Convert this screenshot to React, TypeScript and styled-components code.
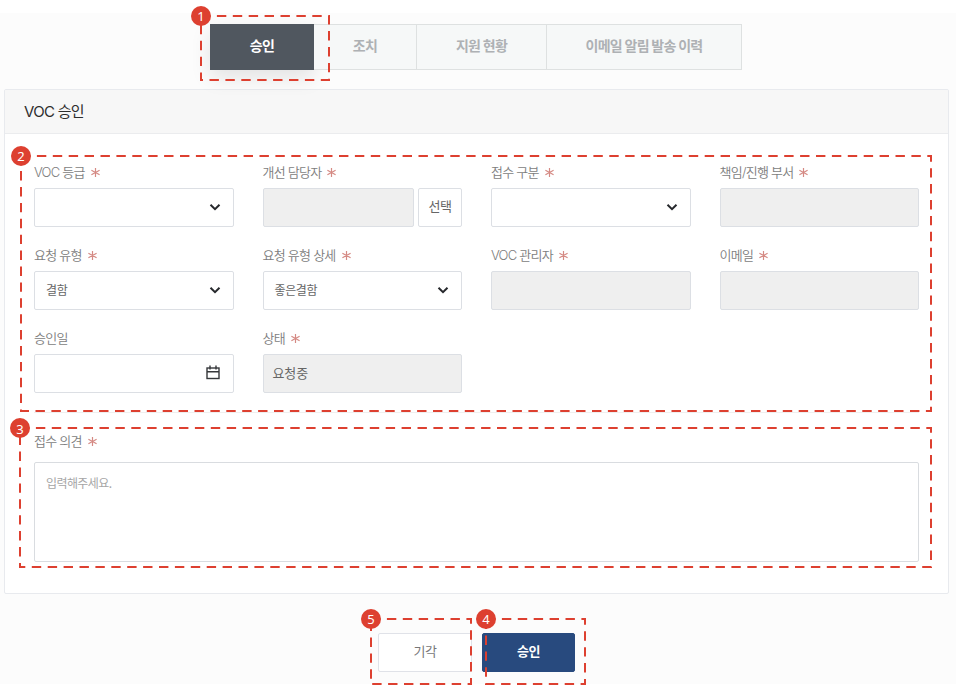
import React from "react";
import styled, { createGlobalStyle, css } from "styled-components";

const GlobalStyle = createGlobalStyle`
  * { box-sizing: border-box; }
  body {
    margin: 0;
    background: #fff;
    font-family: "Noto Sans CJK KR", sans-serif;
  }
`;

const Page = styled.div`
  position: relative;
  width: 956px;
  height: 693px;
  padding: 13px 0 9px;
  overflow: hidden;
`;

const Content = styled.main`
  height: 671px;
  padding: 11px 7px 0 4px;
  background: #fcfcfc;
`;

const Tabs = styled.nav`
  display: flex;
  width: 532px;
  height: 46px;
  margin-left: 206px;
`;

const Tab = styled.button<{ $width: number; $active?: boolean }>`
  width: ${(p) => p.$width}px;
  height: 46px;
  margin: 0;
  padding: 0 0 4px;
  border: 1px solid #dee1e1;
  border-left: 0;
  background: #f6f8f8;
  color: #aeb1b4;
  font: 700 14px "Noto Sans CJK KR", sans-serif;
  letter-spacing: -0.7px;
  ${(p) =>
    p.$active &&
    css`
      border: 0;
      background: #50575f;
      color: #fff;
      box-shadow: 0 8px 20px rgba(0, 0, 0, 0.1);
    `}
`;

const Panel = styled.section`
  height: 505px;
  margin-top: 19px;
  border: 1px solid #e8eaee;
  border-radius: 2px;
  background: #fff;
`;

const PanelHeader = styled.h2`
  display: flex;
  align-items: center;
  height: 44px;
  margin: 0;
  padding: 0 19px;
  border-bottom: 1px solid #ebecee;
  background: rgba(246, 246, 246, 0.85);
  color: #2e2e2e;
  font: 400 15px/22px Inter, "Noto Sans CJK KR", sans-serif;
  letter-spacing: -0.7px;
`;

const PanelBody = styled.div`
  padding: 29px 29px 0;
`;

const FieldGrid = styled.div`
  display: grid;
  grid-template-columns: repeat(4, 1fr);
  column-gap: 29px;
  grid-auto-rows: 83px;
  height: 250px;
  border-bottom: 1px solid #efefef;
`;

const Field = styled.div`
  display: flex;
  flex-direction: column;
`;

const Label = styled.label`
  display: flex;
  align-items: center;
  gap: 6px;
  height: 18px;
  margin-bottom: 7px;
  padding-top: 1px;
  color: #7d7d7d;
  font: 350 13px/17px Inter, "Noto Sans CJK KR", sans-serif;
  letter-spacing: -0.75px;
  white-space: nowrap;
`;

const Star = styled.svg`
  width: 9px;
  height: 9px;
  stroke: #d58a84;
  stroke-width: 1.2;
`;

const Row = styled.div`
  display: flex;
  gap: 4px;
`;

const Box = styled.div<{ $disabled?: boolean }>`
  display: flex;
  flex: 1;
  align-items: center;
  justify-content: space-between;
  height: 39px;
  padding: 0 12px 2px ${(p) => (p.$disabled ? 9 : 11)}px;
  border: 1px solid #dcdfe4;
  border-radius: 2px;
  background: ${(p) => (p.$disabled ? "#efefef" : "#fff")};
  color: #666;
  font-size: ${(p) => (p.$disabled ? 13 : 12)}px;
  letter-spacing: ${(p) => (p.$disabled ? -0.1 : -0.4)}px;
`;

const PickButton = styled.button`
  width: 44px;
  height: 39px;
  padding: 0 0 4px;
  border: 1px solid #dcdfe4;
  border-radius: 2px;
  background: #fff;
  color: #666;
  font: 400 13px "Noto Sans CJK KR", sans-serif;
  letter-spacing: -0.4px;
`;

const Opinion = styled.div`
  padding-top: 19px;
`;

const Textarea = styled.textarea`
  display: block;
  width: 100%;
  height: 100px;
  margin-top: 12px;
  padding: 11px;
  border: 1px solid #d9dce0;
  border-radius: 2px;
  resize: none;
  font: 400 12px/18px "Noto Sans CJK KR", sans-serif;
  letter-spacing: -0.6px;
  &::placeholder { color: #a6a6a6; }
`;

const Actions = styled.div`
  display: flex;
  gap: 10px;
  padding: 38px 0 0 374px;
`;

const ActionButton = styled.button<{ $primary?: boolean }>`
  width: ${(p) => (p.$primary ? 93 : 94)}px;
  height: 39px;
  margin-top: 1px;
  padding: 0 0 4px;
  border: 1px solid ${(p) => (p.$primary ? "#284a7e" : "#e0e2e8")};
  border-radius: 2px;
  background: ${(p) => (p.$primary ? "#284a7e" : "#fff")};
  color: ${(p) => (p.$primary ? "#fff" : "#777")};
  font: ${(p) => (p.$primary ? 700 : 400)} 13px "Noto Sans CJK KR", sans-serif;
  letter-spacing: -0.5px;
`;

const Annotations = styled.svg`
  position: absolute;
  top: 0;
  left: 0;
  pointer-events: none;
`;

const Outline = styled.path`
  fill: none;
  stroke: #dd4030;
  stroke-width: 2;
  stroke-dasharray: 9.4 6.5;
`;

const Dot = styled.circle`
  fill: #dd4030;
`;

const DotNumber = styled.text`
  fill: #fff;
  font: 400 13px "Noto Sans", sans-serif;
  text-anchor: middle;
`;

const Chevron = () => (
  <svg width="12" height="8" viewBox="0 0 12 8" fill="none" stroke="#26282c" strokeWidth="2">
    <path d="M1.5 1.8 6 6.2l4.5-4.4" />
  </svg>
);

const CalendarIcon = () => (
  <svg width="15" height="15" viewBox="0 0 15 15" fill="none" stroke="#36383b" strokeWidth="1.4">
    <rect x="1" y="3" width="12" height="10.5" />
    <path d="M1 6.8h12M4 .5v4M10 .5v4" />
  </svg>
);

const FieldLabel = ({ text, required = true }: { text: string; required?: boolean }) => (
  <Label>
    {text}
    {required && (
      <Star viewBox="0 0 9 9">
        <path d="M4.5 0v9M.4 2.2l8.2 4.6M8.6 2.2.4 6.8" />
      </Star>
    )}
  </Label>
);

type FieldSpec = {
  label: string;
  value?: string;
  kind: "select" | "readonly" | "date" | "picker";
};

const fields: FieldSpec[] = [
  { label: "VOC 등급", kind: "select" },
  { label: "개선 담당자", kind: "picker" },
  { label: "접수 구분", kind: "select" },
  { label: "책임/진행 부서", kind: "readonly" },
  { label: "요청 유형", kind: "select", value: "결함" },
  { label: "요청 유형 상세", kind: "select", value: "좋은결함" },
  { label: "VOC 관리자", kind: "readonly" },
  { label: "이메일", kind: "readonly" },
  { label: "승인일", kind: "date" },
  { label: "상태", kind: "readonly", value: "요청중" },
];

const notes = [
  { n: 1, x: 201, y: 16, r: 329, b: 80 },
  { n: 2, x: 21, y: 156, r: 931, b: 411 },
  { n: 3, x: 20, y: 428, r: 931, b: 567 },
  { n: 5, x: 371, y: 619, r: 471, b: 684 },
  { n: 4, x: 486, y: 619, r: 585, b: 684 },
];

export default function App() {
  return (
    <>
      <GlobalStyle />
      <Page>
        <Content>
          <Tabs>
            <Tab $width={104} $active>승인</Tab>
            <Tab $width={103}>조치</Tab>
            <Tab $width={130}>지원 현황</Tab>
            <Tab $width={195}>이메일 알림 발송 이력</Tab>
          </Tabs>
          <Panel>
            <PanelHeader>VOC 승인</PanelHeader>
            <PanelBody>
              <FieldGrid>
                {fields.map((f) => (
                  <Field key={f.label}>
                    <FieldLabel text={f.label} required={f.kind !== "date"} />
                    <Row>
                      <Box $disabled={f.kind === "readonly" || f.kind === "picker"}>
                        <span>{f.value}</span>
                        {f.kind === "select" && <Chevron />}
                        {f.kind === "date" && <CalendarIcon />}
                      </Box>
                      {f.kind === "picker" && <PickButton>선택</PickButton>}
                    </Row>
                  </Field>
                ))}
              </FieldGrid>
              <Opinion>
                <FieldLabel text="접수 의견" />
                <Textarea placeholder="입력해주세요." />
              </Opinion>
            </PanelBody>
          </Panel>
          <Actions>
            <ActionButton>기각</ActionButton>
            <ActionButton $primary>승인</ActionButton>
          </Actions>
        </Content>
        <Annotations width="956" height="693">
          {notes.map(({ n, x, y, r, b }) => (
            <g key={n}>
              <Outline d={`M${x} ${y}H${r}V${b}H${x}Z`} />
              <Dot cx={x} cy={y} r="10" />
              <DotNumber x={x} y={y + (n === 3 ? 6 : 5)}>{n}</DotNumber>
            </g>
          ))}
        </Annotations>
      </Page>
    </>
  );
}
